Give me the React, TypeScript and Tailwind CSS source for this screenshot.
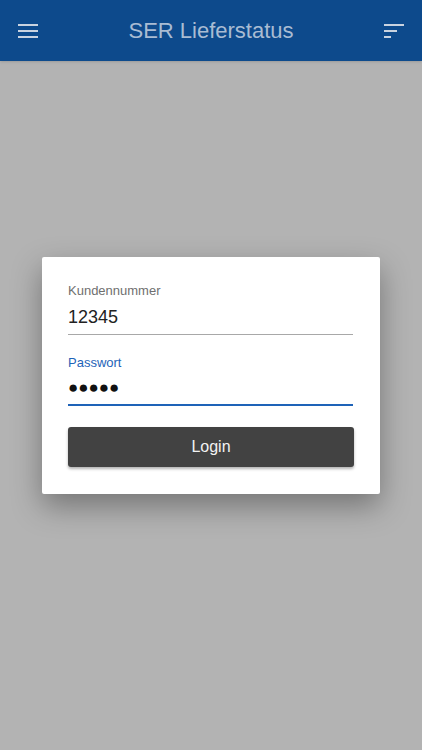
const App = () => {
  return (
    <div
      className="flex h-[750px] w-full flex-col bg-[#b3b3b3]"
      style={{ fontFamily: '"Liberation Sans", Arial, sans-serif' }}
    >
      <header className="flex h-[61px] shrink-0 items-center justify-between bg-[#0d4a8c] px-[18px] shadow-sm">
        <svg width="20" height="16" viewBox="0 0 20 16" className="text-[#c9d3e0]">
          <rect x="0" y="1" width="20" height="2" fill="currentColor" />
          <rect x="0" y="7" width="20" height="2" fill="currentColor" />
          <rect x="0" y="13" width="20" height="2" fill="currentColor" />
        </svg>
        <h1 className="text-[22px] text-[#a9bcd3]">SER Lieferstatus</h1>
        <svg width="20" height="16" viewBox="0 0 20 16" className="text-[#c9d3e0]">
          <rect x="0" y="1" width="20" height="2" fill="currentColor" />
          <rect x="0" y="7" width="13" height="2" fill="currentColor" />
          <rect x="0" y="13" width="7" height="2" fill="currentColor" />
        </svg>
      </header>

      <div className="flex flex-1 items-start justify-center pt-[196px]">
        <form className="w-[338px] rounded-[2px] bg-white px-[26px] pt-[26px] pb-[27px] shadow-[0_12px_30px_rgba(0,0,0,0.35)]">
          <div className="flex flex-col">
            <label className="text-[13px] leading-4 text-[#6f6f6f]">Kundennummer</label>
            <div className="mt-[6px] mr-[1px] border-b border-[#a8a8a8] pb-[5px] text-[18px] leading-[24px] text-[#222]">
              12345
            </div>
          </div>
          <div className="mt-[20px] flex flex-col">
            <label className="text-[13px] leading-4 text-[#1e63b8]">Passwort</label>
            <div className="mt-[5px] mr-[1px] border-b-2 border-[#1e63b8] pb-[4px] text-[17px] leading-[24px] text-[#111]">
              ●●●●●
            </div>
          </div>
          <button
            type="button"
            className="mt-[21px] h-[40px] w-full rounded-[3px] bg-[#424242] text-[16px] text-[#f2f2f2] shadow-[0_2px_3px_rgba(0,0,0,0.3)]"
          >
            Login
          </button>
        </form>
      </div>
    </div>
  );
};

export default App;
